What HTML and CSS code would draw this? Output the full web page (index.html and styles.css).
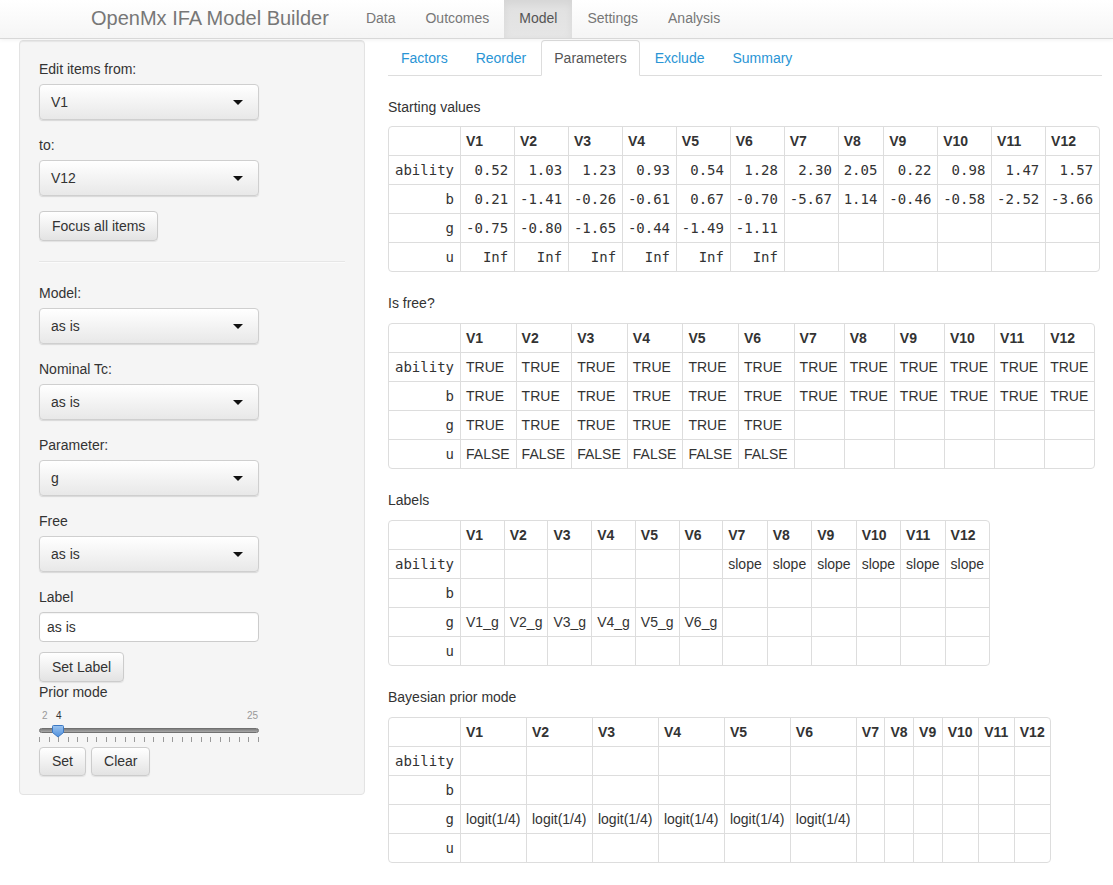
FILE: index.html
```html
<!DOCTYPE html>
<html>
<head>
<meta charset="utf-8">
<title>OpenMx IFA Model Builder</title>
<link rel="stylesheet" href="styles.css">
</head>
<body>
<nav class="navbar">
  <span class="brand">OpenMx IFA Model Builder</span>
  <ul class="nav">
    <li><a>Data</a></li>
    <li><a>Outcomes</a></li>
    <li class="active"><a>Model</a></li>
    <li><a>Settings</a></li>
    <li><a>Analysis</a></li>
  </ul>
</nav>
<div class="page">
  <aside class="well">
    <div class="form-group">
      <label class="lbl">Edit items from:</label>
      <div class="select"><span>V1</span><i class="caret"></i></div>
    </div>
    <div class="form-group">
      <label class="lbl">to:</label>
      <div class="select"><span>V12</span><i class="caret"></i></div>
    </div>
    <button class="btn">Focus all items</button>
    <hr class="sep">
    <div class="form-group">
      <label class="lbl">Model:</label>
      <div class="select"><span>as is</span><i class="caret"></i></div>
    </div>
    <div class="form-group">
      <label class="lbl">Nominal Tc:</label>
      <div class="select"><span>as is</span><i class="caret"></i></div>
    </div>
    <div class="form-group">
      <label class="lbl">Parameter:</label>
      <div class="select"><span>g</span><i class="caret"></i></div>
    </div>
    <div class="form-group">
      <label class="lbl">Free</label>
      <div class="select"><span>as is</span><i class="caret"></i></div>
    </div>
    <div class="form-group tight">
      <label class="lbl">Label</label>
      <div class="input">as is</div>
    </div>
    <button class="btn">Set Label</button>
    <label class="lbl">Prior mode</label>
    <div class="slider">
      <span class="sl-min">2</span>
      <span class="sl-val" style="left:19px">4</span>
      <span class="sl-max">25</span>
      <div class="track"></div>
      <div class="ticks">
        <i></i><i></i><i></i><i></i><i></i><i></i><i></i><i></i><i></i><i></i><i></i><i></i>
        <i></i><i></i><i></i><i></i><i></i><i></i><i></i><i></i><i></i><i></i><i></i><i></i>
      </div>
      <svg class="handle" style="left:13px" width="12" height="13" viewBox="0 0 12 13">
        <defs>
          <linearGradient id="hg" x1="0" y1="0" x2="0" y2="1">
            <stop offset="0" stop-color="#9cc4f0"/>
            <stop offset="1" stop-color="#4d8fdc"/>
          </linearGradient>
        </defs>
        <path d="M1.5 0.5 H10.5 Q11.5 0.5 11.5 1.5 V7.5 L6 12 L0.5 7.5 V1.5 Q0.5 0.5 1.5 0.5 Z" fill="url(#hg)" stroke="#3c78c2" stroke-width="1"/>
      </svg>
    </div>
    <div class="btn-row">
      <button class="btn sm">Set</button>
      <button class="btn sm">Clear</button>
    </div>
  </aside>

  <main class="main">
    <ul class="tabs">
      <li><a>Factors</a></li>
      <li><a>Reorder</a></li>
      <li class="active"><a>Parameters</a></li>
      <li><a>Exclude</a></li>
      <li><a>Summary</a></li>
    </ul>

    <div class="section first">Starting values</div>
    <table class="tbl num">
      <thead><tr><th></th><th>V1</th><th>V2</th><th>V3</th><th>V4</th><th>V5</th><th>V6</th><th>V7</th><th>V8</th><th>V9</th><th>V10</th><th>V11</th><th>V12</th></tr></thead>
      <tbody>
        <tr><td class="rn">ability</td><td>0.52</td><td>1.03</td><td>1.23</td><td>0.93</td><td>0.54</td><td>1.28</td><td>2.30</td><td>2.05</td><td>0.22</td><td>0.98</td><td>1.47</td><td>1.57</td></tr>
        <tr><td class="rn">b</td><td>0.21</td><td>-1.41</td><td>-0.26</td><td>-0.61</td><td>0.67</td><td>-0.70</td><td>-5.67</td><td>1.14</td><td>-0.46</td><td>-0.58</td><td>-2.52</td><td>-3.66</td></tr>
        <tr><td class="rn">g</td><td>-0.75</td><td>-0.80</td><td>-1.65</td><td>-0.44</td><td>-1.49</td><td>-1.11</td><td></td><td></td><td></td><td></td><td></td><td></td></tr>
        <tr><td class="rn">u</td><td>Inf</td><td>Inf</td><td>Inf</td><td>Inf</td><td>Inf</td><td>Inf</td><td></td><td></td><td></td><td></td><td></td><td></td></tr>
      </tbody>
    </table>

    <div class="section">Is free?</div>
    <table class="tbl wide">
      <thead><tr><th></th><th>V1</th><th>V2</th><th>V3</th><th>V4</th><th>V5</th><th>V6</th><th>V7</th><th>V8</th><th>V9</th><th>V10</th><th>V11</th><th>V12</th></tr></thead>
      <tbody>
        <tr><td class="rn">ability</td><td>TRUE</td><td>TRUE</td><td>TRUE</td><td>TRUE</td><td>TRUE</td><td>TRUE</td><td>TRUE</td><td>TRUE</td><td>TRUE</td><td>TRUE</td><td>TRUE</td><td>TRUE</td></tr>
        <tr><td class="rn">b</td><td>TRUE</td><td>TRUE</td><td>TRUE</td><td>TRUE</td><td>TRUE</td><td>TRUE</td><td>TRUE</td><td>TRUE</td><td>TRUE</td><td>TRUE</td><td>TRUE</td><td>TRUE</td></tr>
        <tr><td class="rn">g</td><td>TRUE</td><td>TRUE</td><td>TRUE</td><td>TRUE</td><td>TRUE</td><td>TRUE</td><td></td><td></td><td></td><td></td><td></td><td></td></tr>
        <tr><td class="rn">u</td><td>FALSE</td><td>FALSE</td><td>FALSE</td><td>FALSE</td><td>FALSE</td><td>FALSE</td><td></td><td></td><td></td><td></td><td></td><td></td></tr>
      </tbody>
    </table>

    <div class="section">Labels</div>
    <table class="tbl">
      <thead><tr><th></th><th>V1</th><th>V2</th><th>V3</th><th>V4</th><th>V5</th><th>V6</th><th>V7</th><th>V8</th><th>V9</th><th>V10</th><th>V11</th><th>V12</th></tr></thead>
      <tbody>
        <tr><td class="rn">ability</td><td></td><td></td><td></td><td></td><td></td><td></td><td>slope</td><td>slope</td><td>slope</td><td>slope</td><td>slope</td><td>slope</td></tr>
        <tr><td class="rn">b</td><td></td><td></td><td></td><td></td><td></td><td></td><td></td><td></td><td></td><td></td><td></td><td></td></tr>
        <tr><td class="rn">g</td><td>V1_g</td><td>V2_g</td><td>V3_g</td><td>V4_g</td><td>V5_g</td><td>V6_g</td><td></td><td></td><td></td><td></td><td></td><td></td></tr>
        <tr><td class="rn">u</td><td></td><td></td><td></td><td></td><td></td><td></td><td></td><td></td><td></td><td></td><td></td><td></td></tr>
      </tbody>
    </table>

    <div class="section">Bayesian prior mode</div>
    <table class="tbl prior">
      <thead><tr><th></th><th>V1</th><th>V2</th><th>V3</th><th>V4</th><th>V5</th><th>V6</th><th>V7</th><th>V8</th><th>V9</th><th>V10</th><th>V11</th><th>V12</th></tr></thead>
      <tbody>
        <tr><td class="rn">ability</td><td></td><td></td><td></td><td></td><td></td><td></td><td></td><td></td><td></td><td></td><td></td><td></td></tr>
        <tr><td class="rn">b</td><td></td><td></td><td></td><td></td><td></td><td></td><td></td><td></td><td></td><td></td><td></td><td></td></tr>
        <tr><td class="rn">g</td><td>logit(1/4)</td><td>logit(1/4)</td><td>logit(1/4)</td><td>logit(1/4)</td><td>logit(1/4)</td><td>logit(1/4)</td><td></td><td></td><td></td><td></td><td></td><td></td></tr>
        <tr><td class="rn">u</td><td></td><td></td><td></td><td></td><td></td><td></td><td></td><td></td><td></td><td></td><td></td><td></td></tr>
      </tbody>
    </table>
  </main>
</div>
</body>
</html>
```

FILE: styles.css
```css
* { box-sizing: border-box; }
html, body { margin: 0; padding: 0; background: #fff; }
body {
  font-family: "Liberation Sans", Arial, sans-serif;
  font-size: 14px;
  line-height: 20px;
  color: #333;
}

/* navbar */
.navbar {
  display: flex;
  align-items: stretch;
  height: 39px;
  padding-left: 76px;
  background: linear-gradient(#ffffff, #f5f5f5);
  border-bottom: 1px solid #d8d8d8;
  box-shadow: 0 1px 4px rgba(0,0,0,0.06);
  position: relative;
  z-index: 2;
}
.brand {
  font-size: 20px;
  line-height: 36px;
  color: #777;
  padding: 0 22px 0 15px;
}
.nav { list-style: none; margin: 0; padding: 0; display: flex; }
.nav li a {
  display: block;
  padding: 0 15px;
  line-height: 36px;
  height: 38px;
  color: #777;
}
.nav li.active a {
  background: linear-gradient(#e0e0e0, #e6e6e6);
  box-shadow: inset 0 3px 8px rgba(0,0,0,0.06);
  color: #555;
}

/* page */
.page {
  display: flex;
  align-items: flex-start;
  padding-left: 19px;
  padding-top: 1px;
  gap: 23px;
}

/* sidebar well */
.well {
  width: 346px;
  background: #f5f5f5;
  border: 1px solid #e3e3e3;
  border-radius: 4px;
  box-shadow: inset 0 1px 1px rgba(0,0,0,0.05);
  padding: 18px 19px 18px 19px;
}
.lbl {
  display: block;
  line-height: 20px;
  margin-bottom: 5px;
  color: #333;
}
.form-group { margin-bottom: 15px; }
.form-group.tight { margin-bottom: 10px; }
.select {
  width: 220px;
  height: 36px;
  display: flex;
  align-items: center;
  justify-content: space-between;
  padding: 0 15px 0 11px;
  background: linear-gradient(#ffffff, #e8e8e8);
  border: 1px solid #cfcfcf;
  border-radius: 4px;
  box-shadow: 0 1px 1px rgba(0,0,0,0.12);
  color: #333;
}
.caret {
  width: 0; height: 0;
  border-left: 5px solid transparent;
  border-right: 5px solid transparent;
  border-top: 5px solid #111;
}
.input {
  width: 220px;
  height: 30px;
  line-height: 28px;
  padding: 0 7px;
  background: #fff;
  border: 1px solid #ccc;
  border-radius: 4px;
  box-shadow: inset 0 1px 1px rgba(0,0,0,0.05);
  color: #333;
}
.btn {
  display: block;
  height: 30px;
  padding: 0 12px;
  font-family: inherit;
  font-size: 14px;
  line-height: 28px;
  color: #333;
  background: linear-gradient(#ffffff, #e3e3e3);
  border: 1px solid #cccccc;
  border-radius: 4px;
  box-shadow: 0 1px 1px rgba(0,0,0,0.08);
}
.btn.sm { height: 29px; line-height: 27px; }
.btn-row { display: flex; gap: 5px; }
.sep {
  border: 0;
  border-top: 1px solid #e6e6e6;
  border-bottom: 1px solid #fbfbfb;
  margin: 20px 0 20px 0;
  height: 0;
}

/* slider */
.slider {
  position: relative;
  width: 220px;
  height: 40px;
}
.slider span {
  position: absolute;
  top: 3px;
  font-size: 10px;
  line-height: 12px;
  color: #999;
}
.sl-min { left: 3px; }
.sl-max { right: 1px; }
.slider .sl-val { color: #333; margin-left: -2px; }
.track {
  position: absolute;
  top: 21px;
  left: 0;
  right: 0;
  height: 5px;
  border-radius: 3px;
  background: linear-gradient(#7d7d7d, #a8a8a8);
  border: 1px solid #707070;
}
.ticks {
  position: absolute;
  top: 30px;
  left: 0;
  right: 0;
  display: flex;
  justify-content: space-between;
}
.ticks i {
  display: block;
  width: 1px;
  height: 5px;
  background: #9a9a9a;
}
.handle {
  position: absolute;
  top: 18px;
}

/* main */
.main { width: 714px; }
.tabs {
  list-style: none;
  margin: 0;
  padding: 0;
  display: flex;
  border-bottom: 1px solid #ddd;
}
.tabs li { margin-bottom: -1px; }
.tabs li a {
  display: block;
  margin-right: 2px;
  padding: 7px 12px;
  line-height: 20px;
  border: 1px solid transparent;
  border-radius: 4px 4px 0 0;
  color: #2a95d5;
}
.tabs li.active a {
  color: #555;
  background: #fff;
  border-color: #ddd #ddd transparent #ddd;
}
.section {
  margin-top: 21px;
  margin-bottom: 10px;
  line-height: 20px;
}
.section.first { margin-top: 21px; margin-bottom: 9px; }

.tbl {
  border-collapse: separate;
  border-spacing: 0;
  border: 1px solid #ddd;
  border-radius: 4px;
  background: #fff;
}
.tbl th, .tbl td {
  padding: 4px 5px;
  line-height: 20px;
  border-left: 1px solid #ddd;
  border-top: 1px solid #ddd;
  text-align: left;
  white-space: nowrap;
  font-size: 14px;
}
.tbl.num th, .tbl.num td { padding-right: 5.8px; }
.tbl.wide th, .tbl.wide td { padding-right: 6px; }
.tbl.prior th, .tbl.prior td { padding-right: 5.5px; }
.tbl th { font-weight: bold; }
.tbl thead th { border-top: none; }
.tbl tr > :first-child { border-left: none; }
.tbl td.rn {
  font-family: "DejaVu Sans Mono", monospace;
  text-align: right;
  padding: 4px 6px;
}
.tbl.num td {
  font-family: "DejaVu Sans Mono", monospace;
  text-align: right;
}
```
